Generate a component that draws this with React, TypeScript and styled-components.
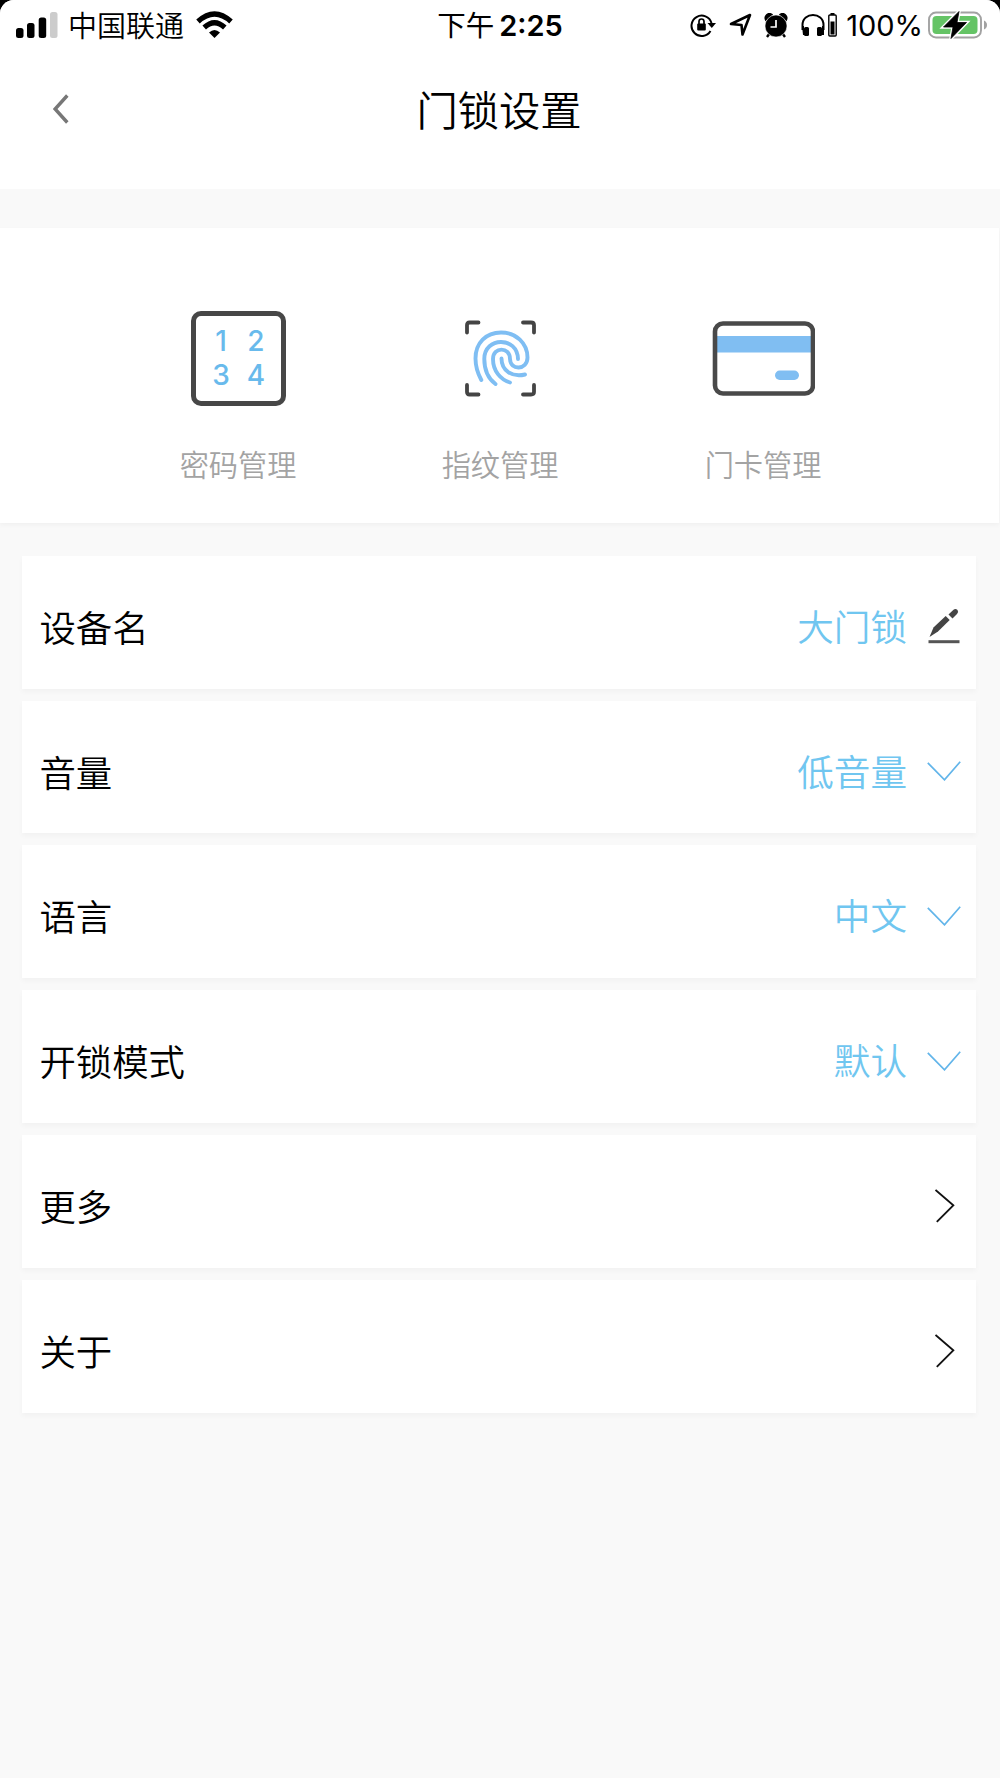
import React from "react";
import styled, { createGlobalStyle } from "styled-components";

const Global = createGlobalStyle`
  *{box-sizing:border-box}
  html{background:#000}
  body{margin:0;font-family:"Noto Sans CJK SC",sans-serif;color:#000}
`;
const Screen = styled.main`
  width:1000px;height:1778px;background:#f9f9f9;display:flex;flex-direction:column;
  border-radius:14px 14px 0 0;overflow:hidden;
`;
const Top = styled.header`
  height:189px;background:#fff;flex:none;display:flex;flex-direction:column;
`;
const StatusBar = styled.div`
  height:50px;display:grid;grid-template-columns:1fr auto 1fr;align-items:center;
  padding:0 13px 0 16px;white-space:nowrap;
`;
const Group = styled.div<{ $end?: boolean }>`
  display:flex;align-items:center;height:50px;justify-content:${p => p.$end ? "flex-end" : "flex-start"};
`;
const Carrier = styled.span`
  font-size:29px;line-height:48px;height:50px;margin:0 12px 0 10px;font-weight:350;
`;
const Clock = styled.div`
  font-size:28.5px;line-height:48px;height:50px;font-weight:400;display:flex;gap:5px;
  margin-right:3px;
`;
const Digits = styled.span`
  font-family:Inter,sans-serif;font-size:29px;line-height:51px;font-weight:600;
`;
const Percent = styled.span`
  font-family:Inter,sans-serif;font-size:29px;line-height:51px;margin:0 5px 0 9px;
`;
const NavBar = styled.div`
  height:118px;display:grid;grid-template-columns:100px 1fr 100px;align-items:center;
`;
const Back = styled.button`
  border:0;background:none;padding:0 0 0 51px;display:flex;
`;
const Title = styled.h1`
  margin:0 2px 2px 0;font-size:41.3px;line-height:60px;font-weight:350;text-align:center;
`;
const Shortcuts = styled.section`
  margin-top:39px;height:294.7px;flex:none;background:#fff;padding:82px 104px 0 107px;
  margin-right:1px;
  display:grid;grid-template-columns:262px 262px 264px;box-shadow:0 2px 5px rgba(0,0,0,.04);
`;
const Shortcut = styled.div`
  display:flex;flex-direction:column;align-items:center;
`;
const Caption = styled.span`
  font-size:29.2px;line-height:40px;margin-top:37px;color:#a3a3a3;font-weight:350;
`;
const List = styled.section`
  margin-top:33px;padding:0 24px 0 22.4px;display:flex;flex-direction:column;gap:12px;
`;
const Row = styled.div`
  height:132.9px;background:#fff;padding:0 15px 0 17px;display:flex;align-items:center;
  box-shadow:0 3px 5px rgba(0,0,0,.03);
  > svg{margin-top:8px}
`;
const Label = styled.span`
  font-size:36.4px;line-height:54px;margin:7px 0 0;flex:1;font-weight:350;
`;
const Value = styled.span`
  font-size:36.6px;line-height:54px;margin:7px 20px 0 0;color:#70c6f0;font-weight:350;
`;

const Signal = () => (
  <svg width="42" height="28" viewBox="0 0 42 28">
    <rect x="0" y="17" width="7.5" height="10" rx="2.5" />
    <rect x="11" y="12" width="7.5" height="15" rx="2.5" />
    <rect x="22.7" y="6.5" width="7.5" height="20.5" rx="2.5" />
    <rect x="34" y="1" width="7.5" height="26" rx="2.5" fill="#ccc" />
  </svg>
);
const Wifi = () => (
  <svg width="37" height="28" viewBox="0 0 37 28" fill="none" stroke="#000">
    <path d="M2 10.5Q18.5-4.5 35 10.5" strokeWidth="5.2" />
    <path d="M8.2 16.5Q18.5 7 28.8 16.5" strokeWidth="5.2" />
    <path d="M13 21.5Q18.5 16.5 24 21.5L18.5 27Z" fill="#000" stroke="none" />
  </svg>
);
const RotationLock = () => (
  <svg width="26" height="26" viewBox="0 0 26 26" fill="none" stroke="#000" strokeWidth="2">
    <path d="M20.5 19A10.2 10.2 0 1 1 21.5 11" />
    <path d="M17.5 11H26L21.8 16Z" fill="#000" stroke="none" />
    <path d="M9 12V9.5a2.5 2.5 0 0 1 5 0V12" strokeWidth="1.7" />
    <rect x="7.2" y="11.5" width="8.6" height="7" rx="1" fill="#000" stroke="none" />
  </svg>
);
const Locate = () => (
  <svg width="23" height="24" viewBox="0 0 23 24" fill="none" stroke="#000" strokeWidth="2.6" strokeLinejoin="round">
    <path d="M2 11L21 2L13.5 21.5L12.5 12Z" />
  </svg>
);
const Alarm = () => (
  <svg width="24" height="25" viewBox="0 0 24 25">
    <path d="M5.5 20.5L3 24M18.5 20.5L21 24" stroke="#000" strokeWidth="2.4" />
    <path d="M1.8 6.5A4 4 0 0 1 7.5 1.5ZM22.2 6.5A4 4 0 0 0 16.5 1.5Z" stroke="#000" strokeWidth="2" />
    <circle cx="12" cy="13" r="11" stroke="#fff" strokeWidth=".6" />
    <path d="M12 7v7H6.5" fill="none" stroke="#fff" strokeWidth="1.7" />
  </svg>
);
const Headphones = () => (
  <svg width="36" height="26" viewBox="0 0 36 26">
    <path d="M1.5 18V13C1.5-.3 22.5-.3 22.5 13V18" fill="none" stroke="#000" strokeWidth="2" />
    <rect x="3" y="15" width="5" height="9" rx="1.5" />
    <rect x="16" y="15" width="5" height="9" rx="1.5" />
    <path d="M1 14h2v9H2zM21 14h2v9h-2z" />
    <rect x="27.8" y="3" width="7.4" height="21" rx="1" fill="none" stroke="#000" strokeWidth="1.4" />
    <rect x="29.5" y="1" width="4" height="2" />
    <rect x="29.5" y="9.5" width="4" height="13" />
  </svg>
);
const Battery = () => (
  <svg width="59" height="30" viewBox="0 0 59 30">
    <rect x="1" y="2.5" width="52" height="25" rx="7" fill="#fff" stroke="#a2a2a2" strokeWidth="1.9" />
    <rect x="4.5" y="6" width="45" height="18" rx="4" fill="#65c466" />
    <path d="M56 10.5Q59 12 59 15T56 19.5Z" fill="#a2a2a2" />
    <path d="M31 1.5L15.5 17H25L23 28.5L38.5 12.5H29Z" stroke="#fff" strokeWidth="3.4" />
    <path d="M31 1.5L15.5 17H25L23 28.5L38.5 12.5H29Z" stroke="#000" strokeWidth=".8" />
  </svg>
);
const BackIcon = () => (
  <svg width="18" height="30" viewBox="0 0 18 30" fill="none" stroke="#777" strokeWidth="3.4">
    <path d="M16.3 1.5L4.1 15L16.3 28.5" />
  </svg>
);

const KeypadBox = styled.div`
  width:95px;height:95px;margin-left:1px;border:5px solid #474747;border-radius:10px;
  display:grid;grid-template-columns:35px 35px;grid-template-rows:34px 34px;
  justify-content:center;align-content:center;justify-items:center;align-items:center;
  font:500 28px/34px Inter,sans-serif;color:#68baec;
`;
const IconSlot = styled.div`
  height:96px;display:flex;align-items:center;
`;
const FingerprintIcon = () => (
  <svg width="72" height="78" viewBox="0 0 72 78" fill="none" strokeLinecap="round" strokeLinejoin="round">
    <path d="M3 13.5V6Q3 3.5 5.5 3.5H14.5M59 3.5H67Q70 3.5 70 6V13.5M70 66V73Q70 75.5 67 75.5H59M14.5 75.5H5.5Q3 75.5 3 73V66" stroke="#444" strokeWidth="3.8" />
    <g stroke="#7fbef3" strokeWidth="3.9">
      <path d="M17.3 61C13 53 11.500 46 11.500 39.500C11.500 24 22 13.500 37 13.500C52 13.500 63.500 24 63.500 38.500C63.500 51.500 46 51.500 46 40C46 27.500 29 27.500 29 40C29 52 36.500 60.500 46 63.500" />
      <path d="M31.500 65C23.500 59 20.300 50 20.300 40C20.300 17.500 53.500 17 54 40" />
      <path d="M37.500 39.500C37.500 52 48.500 58.500 61 55.500" />
    </g>
  </svg>
);
const CardIcon = () => (
  <svg width="104" height="76" viewBox="0 0 104 76">
    <rect x="4" y="3.5" width="98" height="70" rx="8" fill="#fff" />
    <path d="M5 16H101V32.5H5Z" fill="#80bef2" />
    <rect x="64" y="50.500" width="24" height="9.500" rx="4.700" fill="#80bef2" />
    <rect x="4" y="3.500" width="98" height="70" rx="8" fill="none" stroke="#494949" strokeWidth="4.600" />
  </svg>
);
const EditIcon = () => (
  <svg width="34" height="36" viewBox="0 0 34 36">
    <path d="M2.500 29L6.500 19.500L18.700 8L22.700 12L11 23.500Z" fill="#444" />
    <path d="M21.500 6.500L26.500 1.800Q28.500 0 30.500 2Q32 4 30 6L25.500 10.500Z" fill="#444" />
    <path d="M1.500 33.700H32.500" stroke="#555" strokeWidth="3" />
  </svg>
);
const DownIcon = () => (
  <svg width="34" height="20" viewBox="0 0 34 20" fill="none" stroke="#62b5ea" strokeWidth="1.7">
    <path d="M.8 1.800L17.500 18.800L33.200 .8" />
  </svg>
);
const RightIcon = () => (
  <svg width="26" height="34" viewBox="0 0 26 34" fill="none" stroke="#111" strokeWidth="1.9">
    <path d="M.5 1L18.300 16.300L1.800 32.800" />
  </svg>
);

type Kind = "edit" | "down" | "right";
const rows: { label: string; value?: string; kind: Kind }[] = [
  { label: "设备名", value: "大门锁", kind: "edit" },
  { label: "音量", value: "低音量", kind: "down" },
  { label: "语言", value: "中文", kind: "down" },
  { label: "开锁模式", value: "默认", kind: "down" },
  { label: "更多", kind: "right" },
  { label: "关于", kind: "right" },
];
const icons = { edit: EditIcon, down: DownIcon, right: RightIcon };

const StatusIcons = styled.div`
  display:flex;align-items:center;gap:12.8px;
`;

export default function App() {
  return (
    <>
      <Global />
      <Screen>
        <Top>
          <StatusBar>
            <Group><Signal /><Carrier>中国联通</Carrier><Wifi /></Group>
            <Clock>下午<Digits>2:25</Digits></Clock>
            <Group $end>
              <StatusIcons><RotationLock /><Locate /><Alarm /><Headphones /></StatusIcons>
              <Percent>100%</Percent>
              <Battery />
            </Group>
          </StatusBar>
          <NavBar>
            <Back aria-label="返回"><BackIcon /></Back>
            <Title>门锁设置</Title>
          </NavBar>
        </Top>
        <Shortcuts>
          <Shortcut>
            <IconSlot>
              <KeypadBox><span>1</span><span>2</span><span>3</span><span>4</span></KeypadBox>
            </IconSlot>
            <Caption>密码管理</Caption>
          </Shortcut>
          <Shortcut><IconSlot><FingerprintIcon /></IconSlot><Caption>指纹管理</Caption></Shortcut>
          <Shortcut><IconSlot><CardIcon /></IconSlot><Caption>门卡管理</Caption></Shortcut>
        </Shortcuts>
        <List>
          {rows.map(({ label, value, kind }) => {
            const Icon = icons[kind];
            return (
              <Row key={label}>
                <Label>{label}</Label>
                {value && <Value>{value}</Value>}
                <Icon />
              </Row>
            );
          })}
        </List>
      </Screen>
    </>
  );
}
